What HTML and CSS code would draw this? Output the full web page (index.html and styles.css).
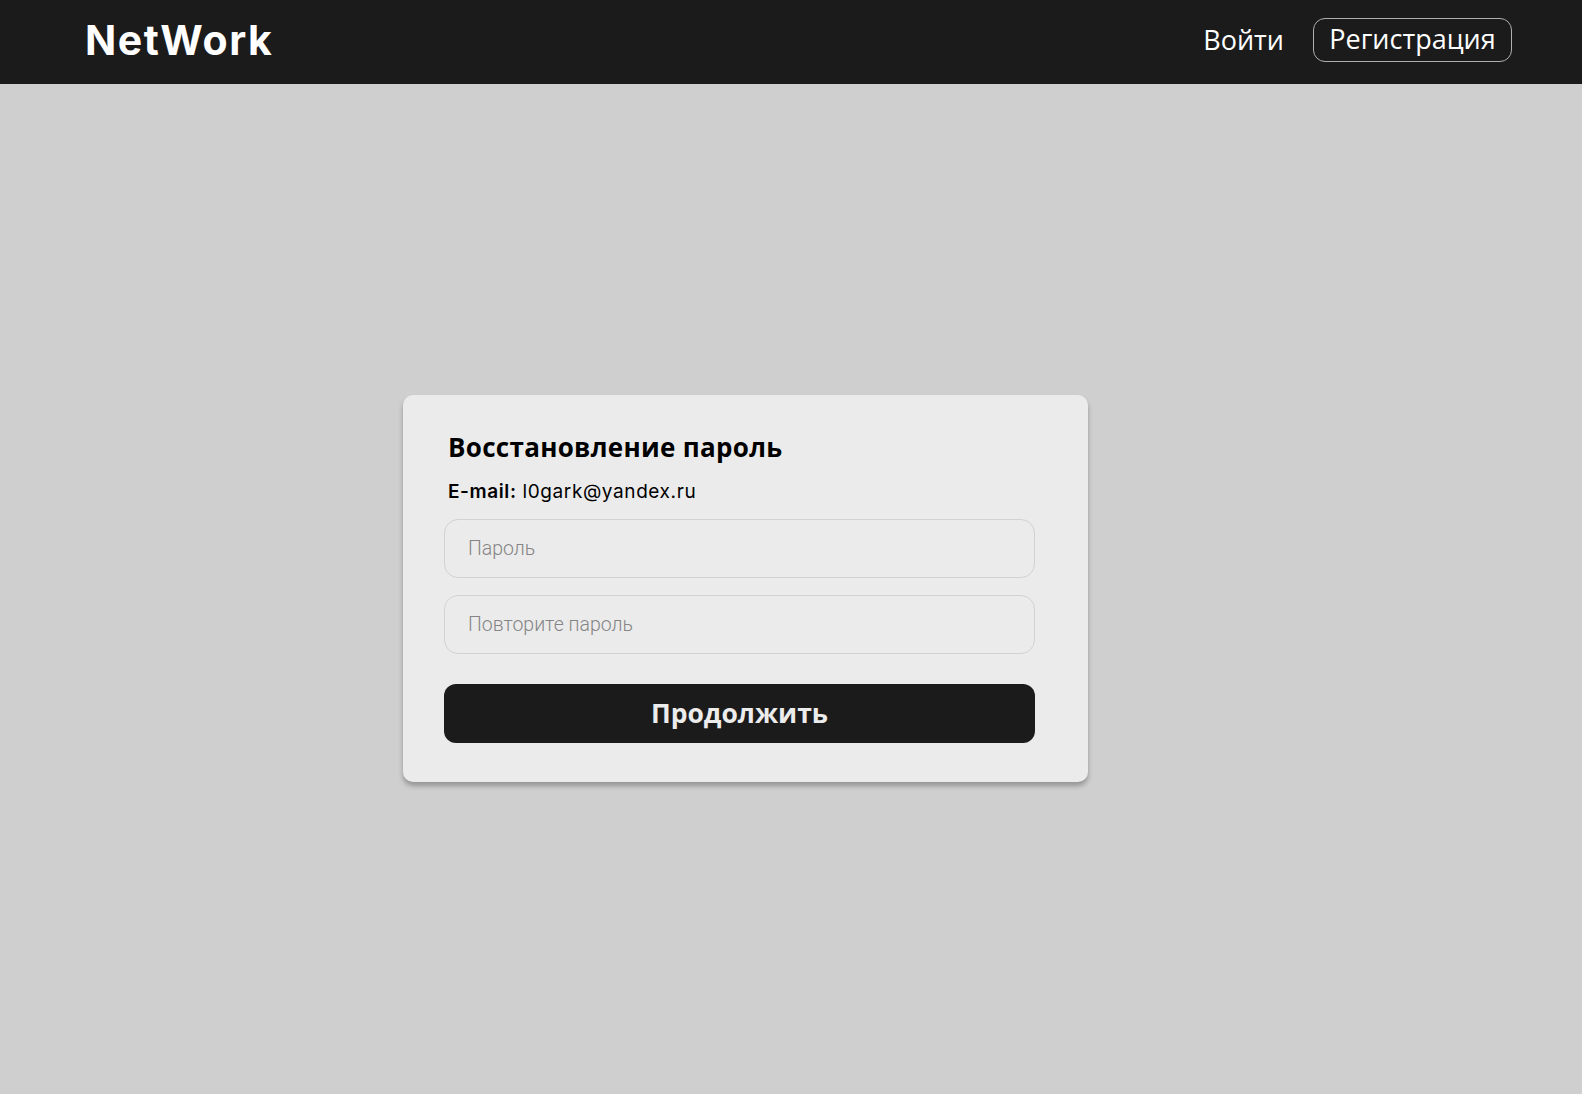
FILE: index.html
```html
<!DOCTYPE html>
<html lang="ru">
<head>
<meta charset="utf-8">
<title>NetWork</title>
<link rel="stylesheet" href="styles.css">
</head>
<body>
<header class="header">
  <div class="logo">NetWork</div>
  <nav class="nav">
    <a class="nav-link" href="#">Войти</a>
    <a class="nav-btn" href="#">Регистрация</a>
  </nav>
</header>
<main class="main">
  <form class="card">
    <h1 class="card-title">Восстановление пароль</h1>
    <p class="email"><b>E-mail:</b> l0gark@yandex.ru</p>
    <input class="field" type="password" placeholder="Пароль">
    <input class="field" type="password" placeholder="Повторите пароль">
    <button class="submit" type="button">Продолжить</button>
  </form>
</main>
</body>
</html>
```
FILE: styles.css
```css
* { box-sizing: border-box; }
html, body { margin: 0; height: 100%; }
body {
  background: #cfcfcf;
  font-family: "Open Sans", sans-serif;
  display: flex;
  flex-direction: column;
}
.header {
  height: 84px;
  flex: none;
  background: #1b1b1b;
  display: flex;
  align-items: center;
  justify-content: space-between;
  padding: 0 70px 0 85px;
}
.logo {
  font-family: "Inter", sans-serif;
  font-weight: 700;
  font-size: 41px;
  color: #fff;
  letter-spacing: 1.6px;
  margin-top: -4px;
}
.nav {
  display: flex;
  align-items: center;
  gap: 29px;
  margin-top: -4px;
}
.nav-link {
  color: #fff;
  text-decoration: none;
  font-size: 27px;
  margin-top: -2px;
}
.nav-btn {
  color: #fff;
  text-decoration: none;
  font-size: 27px;
  height: 44px;
  width: 199px;
  display: flex;
  align-items: center;
  justify-content: center;
  border: 1px solid #b0b0b0;
  border-radius: 12px;
  padding-bottom: 3px;
}
.main {
  flex: 1;
  display: flex;
  align-items: center;
  padding-left: 403px;
  padding-bottom: 2px;
}
.card {
  width: 685px;
  height: 387px;
  background: #ebebeb;
  border-radius: 10px;
  box-shadow: 0 4px 5px rgba(0,0,0,0.28);
  padding: 29px 53px 38px 41px;
  display: flex;
  flex-direction: column;
}
.card-title {
  margin: 0 0 0 4px;
  font-size: 26px;
  font-weight: 700;
  color: #000;
  line-height: 46px;
  letter-spacing: 0.3px;
}
.email {
  margin: 0 0 0 4px;
  font-family: "Inter", sans-serif;
  font-size: 19px;
  letter-spacing: 0.6px;
  color: #000;
  line-height: 44px;
}
.email b { font-weight: 600; }
.field {
  width: 591px;
  height: 59px;
  border: 1px solid #d2d2d2;
  border-radius: 14px;
  background: #ebebeb;
  padding: 0 23px;
  font-family: "Roboto", sans-serif;
  font-weight: 300;
  font-size: 19.5px;
  margin-top: 5px;
  outline: none;
}
.field + .field { margin-top: 17px; }
.field::placeholder { color: #858585; }
.submit {
  margin-top: 30px;
  width: 591px;
  height: 59px;
  border: none;
  border-radius: 12px;
  background: #1b1b1b;
  color: #ececec;
  font-family: "Open Sans", sans-serif;
  font-weight: 700;
  font-size: 26.5px;
  padding-bottom: 2px;
}
```
